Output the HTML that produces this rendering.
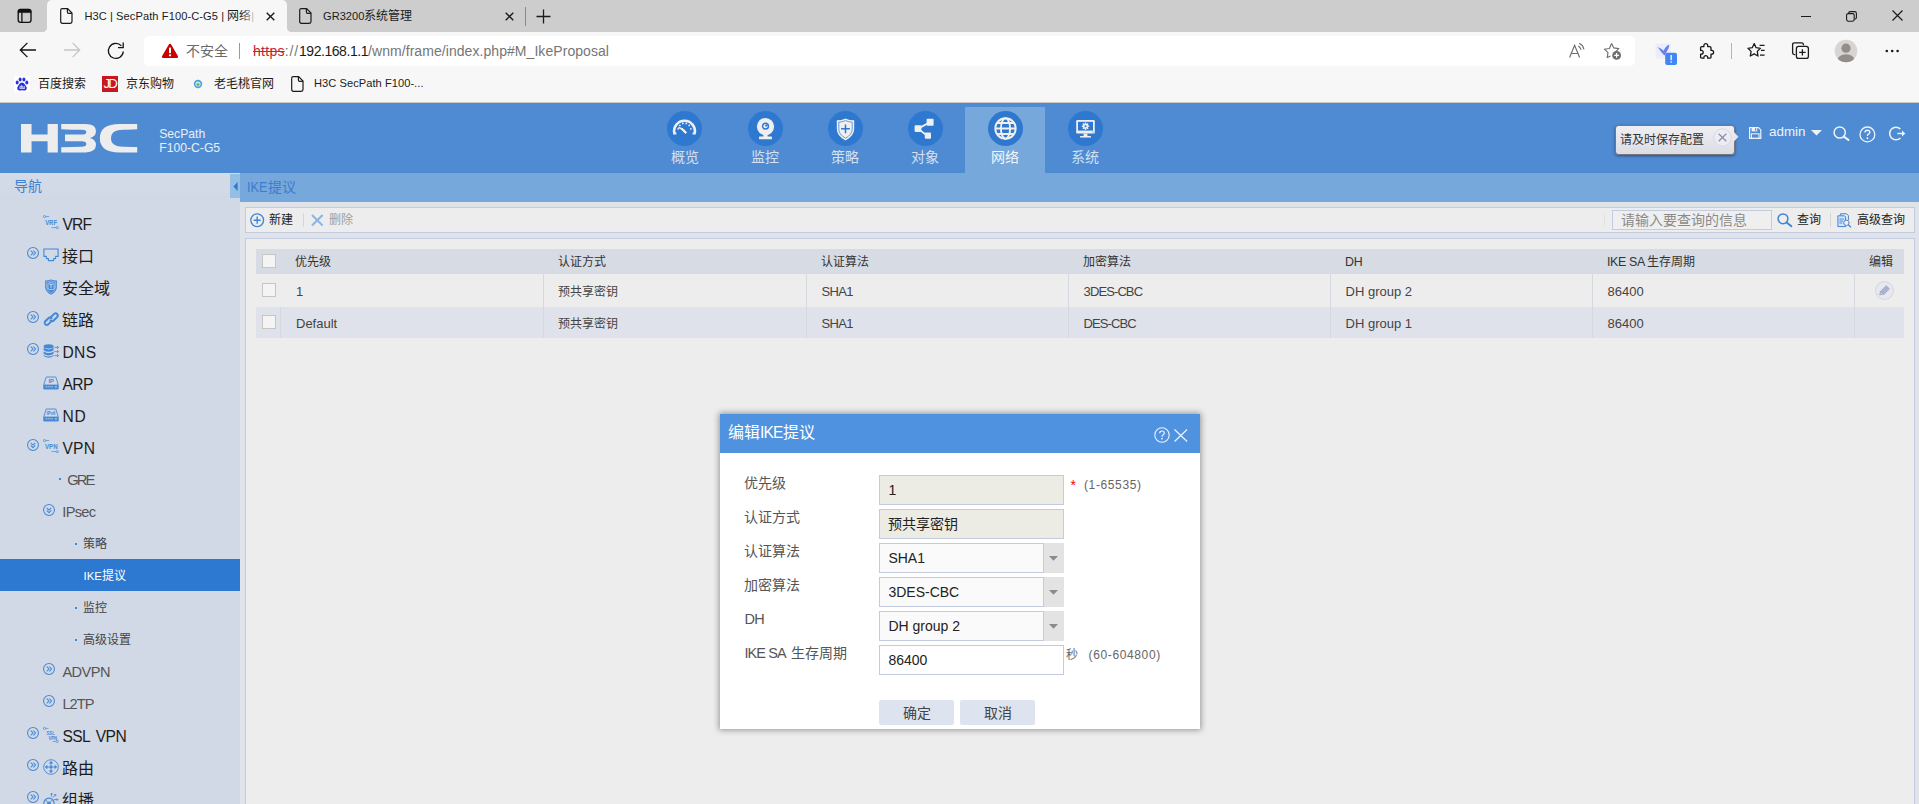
<!DOCTYPE html>
<html lang="zh-CN">
<head>
<meta charset="utf-8">
<title>H3C | SecPath F100-C-G5 | 网络</title>
<style>
*{box-sizing:border-box;margin:0;padding:0}
html,body{width:1919px;height:804px;overflow:hidden;background:#ececec}
body{position:relative;font-family:"Liberation Sans",sans-serif;font-size:12px;color:#333}
.abs{position:absolute}
.t{position:absolute;white-space:nowrap;line-height:1}
svg{position:absolute;overflow:visible}
/* ---------- browser chrome ---------- */
#tabstrip{left:0;top:0;width:1919px;height:32px;background:#cdcdcd}
#tab1{left:47px;top:0;width:240px;height:32px;background:#f7f7f7;border-radius:5px 5px 0 0}
#tab1:before,#tab1:after{content:"";position:absolute;bottom:0;width:4px;height:4px;background:radial-gradient(circle at 0 0,rgba(247,247,247,0) 3.6px,#f7f7f7 4.2px)}
#tab1:before{left:-4px}
#tab1:after{right:-4px;background:radial-gradient(circle at 100% 0,rgba(247,247,247,0) 3.6px,#f7f7f7 4.2px)}
#toolbar{left:0;top:32px;width:1919px;height:70px;background:#f7f7f7}
#addr{left:144px;top:36px;width:1491px;height:30px;background:#fff;border-radius:5px}
#chromeline{left:0;top:102px;width:1919px;height:1px;background:#cdc6c2}
/* ---------- H3C header ---------- */
#hdr{left:0;top:103px;width:1919px;height:70px;background:#4f8bd2}
#subbar{left:240px;top:173px;width:1679px;height:29px;background:#77a8dc}
.navtab{position:absolute;top:107px;width:80px;height:66px}
.navtab.on{background:#77a8dc}
.navtab i{position:absolute;left:22.5px;top:4px;width:35px;height:35px;border-radius:50%;background:#2f78d0}
.navtab span{position:absolute;left:0;width:80px;top:42.6px;text-align:center;font-size:14px;line-height:15px;color:#d3e1f3}
.navtab.on span{color:#f2f6fb}
</style>
</head>
<body>
<!-- ================= BROWSER CHROME ================= -->
<div id="tabstrip" class="abs"></div>
<div id="toolbar" class="abs"></div>
<div id="tab1" class="abs"></div>
<div id="addr" class="abs"></div>
<div id="chromeline" class="abs"></div>
<!--CHROME-START-->
<!-- tab actions icon -->
<svg style="left:16.8px;top:8.2px" width="16" height="16" viewBox="0 0 16 16"><rect x="1.2" y="1.4" width="12.8" height="13" rx="2.3" fill="none" stroke="#111" stroke-width="1.35"/><path d="M1.2 4.6V3.6Q1.2 1.4 3.4 1.4H11.8Q14 1.4 14 3.6V4.6Z" fill="#111" stroke="#111" stroke-width=".6"/><path d="M4.9 4V14" stroke="#111" stroke-width="1.3"/></svg>
<!-- tab 1 -->
<svg style="left:60px;top:8px" width="13" height="16" viewBox="0 0 13 16"><path d="M2.2 .7H7.6L12 5.1V13.6Q12 15.3 10.3 15.3H2.4Q.7 15.3 .7 13.6V2.2Q.7 .7 2.2 .7Z" fill="none" stroke="#1b1b1b" stroke-width="1.2"/><path d="M7.4 .9V4Q7.4 5.3 8.7 5.3H11.8" fill="none" stroke="#1b1b1b" stroke-width="1.2"/></svg>
<div class="t" style="left:84.4px;top:10px;width:173px;overflow:hidden;font-size:12px;color:#1b1b1b"><span style="font-size:11.1px;letter-spacing:.08px">H3C | SecPath F100-C-G5 | </span>网络<span style="font-size:11.1px">| V</span></div>
<div class="abs" style="left:240px;top:4px;width:18px;height:24px;background:linear-gradient(90deg,rgba(247,247,247,0),#f7f7f7)"></div>
<svg style="left:266px;top:12px" width="9" height="9" viewBox="0 0 9 9"><path d="M.7 .7L8.3 8.3M8.3 .7L.7 8.3" stroke="#1b1b1b" stroke-width="1.4"/></svg>
<!-- tab 2 -->
<svg style="left:298.8px;top:8px" width="13" height="16" viewBox="0 0 13 16"><path d="M2.2 .7H7.6L12 5.1V13.6Q12 15.3 10.3 15.3H2.4Q.7 15.3 .7 13.6V2.2Q.7 .7 2.2 .7Z" fill="none" stroke="#1b1b1b" stroke-width="1.2"/><path d="M7.4 .9V4Q7.4 5.3 8.7 5.3H11.8" fill="none" stroke="#1b1b1b" stroke-width="1.2"/></svg>
<div class="t" style="left:323px;top:10px;font-size:12px;color:#1b1b1b"><span style="font-size:11.1px">GR3200</span>系统管理</div>
<svg style="left:505px;top:12px" width="9" height="9" viewBox="0 0 9 9"><path d="M.7 .7L8.3 8.3M8.3 .7L.7 8.3" stroke="#1b1b1b" stroke-width="1.4"/></svg>
<div class="abs" style="left:525px;top:7px;width:1px;height:19px;background:#8a8a8a"></div>
<svg style="left:536px;top:9px" width="15" height="15" viewBox="0 0 15 15"><path d="M7.5 .5V14.5M.5 7.5H14.5" stroke="#1b1b1b" stroke-width="1.3"/></svg>
<!-- window controls -->
<div class="abs" style="left:1801px;top:15.5px;width:10px;height:1.2px;background:#1b1b1b"></div>
<svg style="left:1846px;top:11px" width="11" height="11" viewBox="0 0 11 11"><rect x=".6" y="2.6" width="7.6" height="7.6" rx="1.6" fill="none" stroke="#1b1b1b" stroke-width="1.1"/><path d="M2.8 2.4V2Q2.8 .6 4.2 .6H8.6Q10.4 .6 10.4 2.4V6.6Q10.4 8.2 9 8.2H8.4" fill="none" stroke="#1b1b1b" stroke-width="1.1"/></svg>
<svg style="left:1892px;top:10px" width="11" height="11" viewBox="0 0 11 11"><path d="M.5 .5L10.5 10.5M10.5 .5L.5 10.5" stroke="#1b1b1b" stroke-width="1.2"/></svg>
<!-- nav buttons -->
<svg style="left:19px;top:42.4px" width="18" height="16" viewBox="0 0 18 16"><path d="M8.4 .9L1.3 8L8.4 15.1M1.5 8H17" fill="none" stroke="#141414" stroke-width="1.3"/></svg>
<svg style="left:63px;top:42.4px" width="18" height="16" viewBox="0 0 18 16"><path d="M9.6 .9L16.7 8L9.6 15.1M16.5 8H1" fill="none" stroke="#c6c6c6" stroke-width="1.3"/></svg>
<svg style="left:107px;top:42px" width="18" height="18" viewBox="0 0 18 18"><path d="M16.3 9.5A7.5 7.5 0 1 1 14.4 3.9" fill="none" stroke="#141414" stroke-width="1.3"/><path d="M11 5.7H16.2V.6" fill="none" stroke="#141414" stroke-width="1.3"/></svg>
<!-- address bar contents -->
<svg style="left:161px;top:43px" width="18" height="16" viewBox="0 0 18 16"><path d="M9 .8Q9.8 .8 10.3 1.7L17 13.3Q17.7 15 15.9 15H2.1Q.3 15 1 13.3L7.7 1.7Q8.2 .8 9 .8Z" fill="#c80000"/><rect x="8" y="4.6" width="2" height="5.6" rx=".6" fill="#fff"/><circle cx="9" cy="12.3" r="1.15" fill="#fff"/></svg>
<div class="t" style="left:186px;top:44px;font-size:14px;color:#6a6a6a">不安全</div>
<div class="abs" style="left:239px;top:43px;width:1px;height:16px;background:#9a9a9a"></div>
<div class="t" id="url" style="left:253px;top:44px;font-size:14px;color:#767676;letter-spacing:.06px"><span style="color:#c4262e;text-decoration:line-through;letter-spacing:.3px">https</span><span style="letter-spacing:.8px">://</span><span style="color:#1b1b1b;letter-spacing:-.44px">192.168.1.1</span>/wnm/frame/index.php#M_IkeProposal</div>
<!-- read aloud -->
<svg style="left:1568px;top:42px" width="18" height="18" viewBox="0 0 18 18"><path d="M1.6 15.5L6.6 3.2L11.6 15.5M3.3 11.5H9.9" fill="none" stroke="#6e6e6e" stroke-width="1.15"/><path d="M10.6 4.2Q12.4 5.2 12.9 7.4M11.6 1.6Q15 3.2 15.8 7" fill="none" stroke="#6e6e6e" stroke-width="1.15" stroke-linecap="round"/></svg>
<!-- star plus -->
<svg style="left:1603px;top:42px" width="20" height="19" viewBox="0 0 20 19"><path d="M8.6 1.4L10.8 5.9L15.8 6.6L12.2 10.1M7.4 13.9L4.2 15.6L5 10.7L1.4 7.2L6.4 6.5L8.6 1.4" fill="none" stroke="#6e6e6e" stroke-width="1.15" stroke-linejoin="round"/><circle cx="13.6" cy="13.4" r="4.4" fill="#6e6e6e"/><path d="M13.6 11V15.8M11.2 13.4H16" stroke="#fff" stroke-width="1.2"/></svg>
<!-- bird extension with badge -->
<svg style="left:1655px;top:42px" width="24" height="24" viewBox="0 0 24 24"><defs><linearGradient id="bg1" x1="0" y1="0" x2="1" y2="1"><stop offset="0" stop-color="#4c8ff7"/><stop offset=".65" stop-color="#6a7df0"/><stop offset="1" stop-color="#9460e2"/></linearGradient></defs><rect x=".6" y="1.4" width="15" height="15" rx="1" fill="#ececfa"/><path d="M2.4 4.9Q6 5.8 8.6 8.8Q10.4 4.2 14.3 2.5Q14.2 6.6 11.8 9.6Q10.6 12 9.3 13.6Q7.6 11.4 6 9.8Q4.6 7 2.4 4.9Z" fill="url(#bg1)"/><rect x="10.2" y="10.8" width="11.8" height="12.2" rx="2" fill="#4285f4"/><rect x="15.5" y="13" width="1.3" height="5.2" fill="#fff"/><rect x="15.5" y="19.3" width="1.3" height="1.4" fill="#fff"/></svg>
<!-- puzzle -->
<svg style="left:1698px;top:42px" width="18" height="18" viewBox="0 0 18 18"><path d="M3.8 4.6H5.9V3.5A1.9 1.9 0 1 1 9.7 3.5V4.6H11.8Q13 4.6 13 5.8V8.4H13.7A1.9 1.9 0 1 1 13.7 12.2H13V15Q13 16.2 11.8 16.2H9.7V15.5A1.9 1.9 0 1 0 5.9 15.5V16.2H3.8Q2.6 16.2 2.6 15V12.2H3.3A1.9 1.9 0 1 0 3.3 8.4H2.6V5.8Q2.6 4.6 3.8 4.6Z" fill="none" stroke="#141414" stroke-width="1.3" stroke-linejoin="round"/></svg>
<div class="abs" style="left:1731px;top:43px;width:1px;height:16px;background:#b5b5b5"></div>
<!-- favourites list -->
<svg style="left:1747px;top:42px" width="19" height="18" viewBox="0 0 19 18"><path d="M7.2 1.6L9.1 5.7L13.4 6.3L10.3 9.4L11 14L7.2 11.9L3.3 14L4.1 9.4L1 6.3L5.3 5.7Z" fill="none" stroke="#1b1b1b" stroke-width="1.3" stroke-linejoin="round"/><path d="M12.6 3.4H17.6M14 8.4H17.6M13 13.2H17.6" stroke="#1b1b1b" stroke-width="1.3"/></svg>
<!-- collections -->
<svg style="left:1791px;top:41px" width="19" height="19" viewBox="0 0 19 19"><path d="M4.2 13.6H3.4Q1.6 13.6 1.6 11.8V3.6Q1.6 1.8 3.4 1.8H10.6Q12.4 1.8 12.4 3.6V4.2" fill="none" stroke="#1b1b1b" stroke-width="1.3"/><rect x="5.4" y="5.4" width="12" height="12" rx="2.2" fill="none" stroke="#1b1b1b" stroke-width="1.3"/><path d="M11.4 8.2V14.6M8.2 11.4H14.6" stroke="#1b1b1b" stroke-width="1.3"/></svg>
<!-- profile -->
<svg style="left:1834px;top:39px" width="24" height="24" viewBox="0 0 24 24"><defs><clipPath id="pc"><circle cx="12" cy="12" r="11.3"/></clipPath></defs><circle cx="12" cy="12" r="11.3" fill="#d7d5d2"/><g clip-path="url(#pc)" fill="#918e8b"><circle cx="12" cy="9.2" r="4.6"/><ellipse cx="12" cy="21.5" rx="8.6" ry="6.2"/></g></svg>
<svg style="left:1885px;top:49px" width="15" height="4" viewBox="0 0 15 4"><circle cx="1.8" cy="2" r="1.3" fill="#1b1b1b"/><circle cx="7.2" cy="2" r="1.3" fill="#1b1b1b"/><circle cx="12.6" cy="2" r="1.3" fill="#1b1b1b"/></svg>
<!-- bookmarks -->
<svg style="left:14px;top:76px" width="16" height="16" viewBox="0 0 16 16"><rect width="16" height="16" rx="2" fill="#fff"/><g fill="#2932e1"><ellipse cx="3.2" cy="6.6" rx="1.5" ry="2"/><ellipse cx="6.1" cy="3.4" rx="1.5" ry="2"/><ellipse cx="9.9" cy="3.4" rx="1.5" ry="2"/><ellipse cx="12.8" cy="6.6" rx="1.5" ry="2"/><path d="M8 6.6Q10 6.6 11.6 9.4Q13.4 11.4 12.6 13.2Q11.8 14.8 9.6 14.4Q8 14 6.4 14.4Q4.2 14.8 3.4 13.2Q2.6 11.4 4.4 9.4Q6 6.6 8 6.6Z"/></g><text x="8" y="13.3" font-size="4.6" font-family="Liberation Sans" font-weight="bold" fill="#fff" text-anchor="middle">du</text></svg>
<div class="t" style="left:38px;top:78px;font-size:12px;color:#1b1b1b">百度搜索</div>
<div class="abs" style="left:102px;top:76px;width:16px;height:16px;background:#c81623"></div>
<div class="t" style="left:103.4px;top:77.4px;font-size:13.3px;color:#fff;letter-spacing:-1.7px">JD</div>
<div class="t" style="left:126px;top:78px;font-size:12px;color:#1b1b1b">京东购物</div>
<svg style="left:193px;top:79px" width="10" height="10" viewBox="0 0 10 10"><circle cx="5" cy="5" r="4.2" fill="#4aa3df"/><circle cx="5" cy="5" r="2.6" fill="#cfe9f7"/><circle cx="5" cy="5.4" r="1.5" fill="#6bbf4a"/></svg>
<div class="t" style="left:214px;top:78px;font-size:12px;color:#1b1b1b">老毛桃官网</div>
<svg style="left:291px;top:76px" width="13" height="16" viewBox="0 0 13 16"><path d="M2.2 .7H7.6L12 5.1V13.6Q12 15.3 10.3 15.3H2.4Q.7 15.3 .7 13.6V2.2Q.7 .7 2.2 .7Z" fill="none" stroke="#1b1b1b" stroke-width="1.2"/><path d="M7.4 .9V4Q7.4 5.3 8.7 5.3H11.8" fill="none" stroke="#1b1b1b" stroke-width="1.2"/></svg>
<div class="t" style="left:314px;top:78.4px;font-size:11.1px;color:#1b1b1b;letter-spacing:.05px">H3C SecPath F100-...</div>
<!--CHROME-END-->

<!-- ================= H3C HEADER ================= -->
<div id="hdr" class="abs"></div>
<div id="subbar" class="abs"></div>
<!--HEADER-START-->
<!-- logo -->
<svg style="left:20.5px;top:123.5px" width="116.2" height="28.4" viewBox="0 0 116.7 28.8" preserveAspectRatio="none"><g fill="#ededed"><path d="M0 0H10.6V10.7H26.7V0H37V28.8H26.7V17.5H10.6V28.8H0Z"/><path d="M40.4 0H65Q75.3 0 75.3 7.4Q75.3 12.6 69.2 14.2Q75.3 15.9 75.3 21.4Q75.3 28.8 65 28.8H40.4V23.6Q52 23 61 23Q65.6 23 65.6 20.2Q65.6 17.5 61 17.5H44.2V10.7H61Q65.6 10.7 65.6 8.3Q65.6 5.9 61 5.9Q52 5.9 40.4 5.2Z"/><path d="M116.7 0H99Q79.2 0 79.2 14.4Q79.2 28.8 99 28.8H116.7V23.4Q108 23 103 23Q90.4 23 90.4 14.4Q90.4 5.9 103 5.9Q108 5.9 116.7 5.4Z"/></g></svg>
<div class="t" style="left:159.2px;top:127px;font-size:12.2px;line-height:14.1px;color:#e9eff8">SecPath<br>F100-C-G5</div>
<!-- nav tabs -->
<div class="navtab" style="left:645px"><i style="left:21.7px"></i><span>概览</span>
<svg style="left:21.7px;top:4px" width="35" height="35" viewBox="0 0 35 35"><path d="M7.3 22.2A10.4 10.4 0 1 1 27.7 22.2" fill="none" stroke="#efefef" stroke-width="2.6"/><path d="M6.2 21.4H9.4V23.6H6.2ZM25.6 21.4H28.8V23.6H25.6Z" fill="#efefef"/><g fill="#efefef"><circle cx="11.2" cy="17.8" r=".9"/><circle cx="12.9" cy="14.4" r=".9"/><circle cx="15.8" cy="12.4" r=".9"/><circle cx="19.3" cy="12.4" r=".9"/><circle cx="22.2" cy="14.4" r=".9"/><circle cx="23.8" cy="17.8" r=".9"/></g><path d="M11.6 16.4Q16.5 16.6 19.6 21.4L18.2 22.4Q15.4 18.6 11.6 16.4Z" fill="#efefef" stroke="#efefef" stroke-width="1"/></svg></div>
<div class="navtab" style="left:725px"><i></i><span>监控</span>
<svg style="left:22.5px;top:4px" width="35" height="35" viewBox="0 0 35 35"><circle cx="17.5" cy="15.6" r="8.6" fill="#efefef"/><circle cx="17.5" cy="15.2" r="3.6" fill="#2f78d0"/><circle cx="17.5" cy="15.2" r="2.1" fill="#efefef"/><circle cx="18.2" cy="14.6" r="1.1" fill="#2f78d0"/><rect x="15.4" y="23.5" width="4.2" height="3" fill="#efefef"/><rect x="11" y="25.6" width="13" height="2.6" rx=".6" fill="#efefef"/></svg></div>
<div class="navtab" style="left:805px"><i></i><span>策略</span>
<svg style="left:22.5px;top:4px" width="35" height="35" viewBox="0 0 35 35"><path d="M17.5 7.4Q21.5 9.3 26.2 9.3V18Q26.2 25 17.5 29.4Q8.8 25 8.8 18V9.3Q13.5 9.3 17.5 7.4Z" fill="#efefef"/><path d="M17.5 9.6Q20.6 11 24.2 11.2V18Q24.2 23.6 17.5 27.2Q10.8 23.6 10.8 18V11.2Q14.4 11 17.5 9.6Z" fill="none" stroke="#2f78d0" stroke-width=".7"/><path d="M17.5 13.4V22.2M13.1 17.8H21.9" stroke="#2f78d0" stroke-width="1.5"/></svg></div>
<div class="navtab" style="left:885px"><i></i><span>对象</span>
<svg style="left:22.5px;top:4px" width="35" height="35" viewBox="0 0 35 35"><path d="M10 17.6L22 11.2M10 17.6L19.6 25" stroke="#efefef" stroke-width="1.8" fill="none"/><rect x="6.6" y="14.2" width="6.8" height="6.8" rx="1" fill="#efefef"/><rect x="18.6" y="7.8" width="7" height="7" rx="1" fill="#efefef"/><rect x="16.8" y="21.6" width="6.2" height="6.2" rx="1" fill="#efefef"/></svg></div>
<div class="navtab on" style="left:965px"><i></i><span>网络</span>
<svg style="left:22.5px;top:4px" width="35" height="35" viewBox="0 0 35 35"><g fill="none" stroke="#efefef" stroke-width="1.9"><circle cx="17.5" cy="17.5" r="10.2"/><ellipse cx="17.5" cy="17.5" rx="4.6" ry="10.2"/><path d="M7.3 17.5H27.7M9 12H26M9 23H26"/></g></svg></div>
<div class="navtab" style="left:1045px"><i></i><span>系统</span>
<svg style="left:22.5px;top:4px" width="35" height="35" viewBox="0 0 35 35"><rect x="8.2" y="9" width="18.6" height="13.6" rx="1.2" fill="#efefef"/><rect x="10" y="10.8" width="15" height="8.8" fill="#2f78d0"/><rect x="15.6" y="22.6" width="3.8" height="2.6" fill="#efefef"/><rect x="12" y="25" width="11" height="1.6" rx=".5" fill="#efefef"/><g transform="translate(17.5 15.2)" fill="#efefef"><circle r="2.5"/><rect x="-.75" y="-3.7" width="1.5" height="7.4"/><rect x="-.75" y="-3.7" width="1.5" height="7.4" transform="rotate(45)"/><rect x="-.75" y="-3.7" width="1.5" height="7.4" transform="rotate(90)"/><rect x="-.75" y="-3.7" width="1.5" height="7.4" transform="rotate(135)"/><circle r="1.05" fill="#2f78d0"/></g><circle cx="25" cy="21" r=".6" fill="#2f78d0"/></svg></div>
<!-- save reminder tooltip -->
<div class="abs" style="left:1615.2px;top:125.2px;width:119.6px;height:29.4px;border:1px solid #77777d;border-radius:3.5px;background:linear-gradient(#efeff3,#dcdce4);box-shadow:0 1px 3px rgba(0,0,0,.45)"></div>
<div class="t" style="left:1620.2px;top:134.3px;font-size:12px;color:#333">请及时保存配置</div>
<svg style="left:1712.5px;top:128px" width="19" height="19" viewBox="0 0 19 19"><circle cx="9.5" cy="9.5" r="8.7" fill="#ececf1" stroke="#d3d6e3" stroke-width=".9"/><path d="M5.7 5.7L13.3 13.3M13.3 5.7L5.7 13.3" stroke="#8a8eaf" stroke-width="1.3"/></svg>
<svg style="left:1734.3px;top:132.4px" width="5" height="9.4" viewBox="0 0 5 9.4"><path d="M0 0L4.4 4.7L0 9.4Z" fill="#e6e6ec"/></svg>
<!-- save icon -->
<svg style="left:1748.8px;top:127px" width="12.4" height="12" viewBox="0 0 12.4 12"><path d="M.6 .6H9.6L11.8 2.8V11.4H.6Z" fill="none" stroke="#eef3fa" stroke-width="1.2" stroke-linejoin="round"/><rect x="2.6" y=".8" width="5.6" height="3.6" fill="#eef3fa"/><rect x="6" y="1.2" width="1.2" height="2.4" fill="#4f8bd2"/><rect x="2.4" y="6.8" width="7.6" height="4.6" fill="none" stroke="#eef3fa" stroke-width="1.1"/></svg>
<div class="t" style="left:1769px;top:125px;font-size:13.4px;color:#eef3fa">admin</div>
<svg style="left:1811px;top:130px" width="11" height="6" viewBox="0 0 11 6"><path d="M0 0H11L5.5 5.6Z" fill="#eef3fa"/></svg>
<svg style="left:1832.6px;top:125.8px" width="16.4" height="15" viewBox="0 0 16.4 15"><circle cx="6.7" cy="6.5" r="5.6" fill="none" stroke="#eef3fa" stroke-width="1.5"/><path d="M10.8 10.6L15.4 13.8" stroke="#eef3fa" stroke-width="2.1" stroke-linecap="round"/></svg>
<svg style="left:1858.6px;top:125.5px" width="17" height="17" viewBox="0 0 17 17"><circle cx="8.4" cy="8.4" r="7.4" fill="none" stroke="#eef3fa" stroke-width="1.3"/><path d="M6 6.4Q6 4.2 8.4 4.2Q10.8 4.2 10.8 6.2Q10.8 7.4 9.4 8.2Q8.4 8.8 8.4 10" fill="none" stroke="#eef3fa" stroke-width="1.4"/><circle cx="8.4" cy="12.2" r=".95" fill="#eef3fa"/></svg>
<svg style="left:1888px;top:125px" width="18" height="17" viewBox="0 0 18 17"><path d="M12.4 4A6.3 6.3 0 1 0 12.4 13" fill="none" stroke="#eef3fa" stroke-width="1.6"/><path d="M9.4 8.5H15" stroke="#eef3fa" stroke-width="1.5"/><path d="M14 5.6L17.3 8.5L14 11.4Z" fill="#eef3fa"/></svg>
<!-- sub bar -->
<div class="abs" style="left:0;top:173px;width:240px;height:29px;background:linear-gradient(#d4dbe8,#d0d8e6)"></div>
<div class="t" style="left:14px;top:179px;font-size:14px;color:#3f80d2">导航</div>
<div class="abs" style="left:230px;top:174px;width:10px;height:24px;background:#93bfe5"></div>
<svg style="left:232.6px;top:182px" width="5" height="9" viewBox="0 0 5 9"><path d="M4.6 0V9L.4 4.5Z" fill="#2f78d0"/></svg>
<div class="t" style="left:247.4px;top:180.4px;font-size:14px;color:#3b7cd0"><span style="display:inline-block;font-size:14.8px;transform:scaleX(.85);transform-origin:0 50%;margin-right:-3.4px;vertical-align:baseline">IKE</span>提议</div>
<!--HEADER-END-->

<!-- ================= NAV ================= -->
<!--NAV-START-->
<div class="abs" style="left:0;top:202px;width:240px;height:602px;background:#d2d9e6"></div>
<svg style="left:43px;top:214.7px" width="16" height="16" viewBox="0 0 16 16"><circle cx="1.5" cy="1.6" r="1.1" fill="none" stroke="#4488d8" stroke-width=".7"/><path d="M2.6 1.6H6.2M8.6 12.6H13.2" stroke="#4488d8" stroke-width=".7" fill="none"/><circle cx="14.3" cy="12.6" r="1.1" fill="none" stroke="#4488d8" stroke-width=".7"/><text x="2.2" y="10" font-size="7.4" font-family="Liberation Sans" font-weight="bold" fill="#4488d8" textLength="11.8" lengthAdjust="spacingAndGlyphs">VRF</text></svg>
<div class="t" style="left:62.4px;top:217.1px;font-size:15.6px;color:#1c1c1c;letter-spacing:-0.75px">VRF</div>
<svg style="left:27.0px;top:247.0px" width="12" height="12" viewBox="0 0 12 12"><circle cx="6" cy="6" r="5.45" fill="none" stroke="#4488d8" stroke-width="1.05"/><path d="M3.7 3.7L6 6L3.7 8.3M6.3 3.7L8.6 6L6.3 8.3" fill="none" stroke="#4488d8" stroke-width="1.05"/></svg>
<svg style="left:43px;top:246.7px" width="16" height="16" viewBox="0 0 16 16"><path d="M.9 2H15.1V9.4H12.6V11.6H10.6V13.6H5.4V11.6H3.4V9.4H.9Z" fill="none" stroke="#4488d8" stroke-width="1.1" stroke-linejoin="round"/></svg>
<div class="t" style="left:62.2px;top:249.2px;font-size:16px;color:#1c1c1c;">接口</div>
<svg style="left:43px;top:278.7px" width="16" height="16" viewBox="0 0 16 16"><path d="M8 .4Q11 1.5 13.9 1.5V8Q13.9 13 8 15.8Q2.1 13 2.1 8V1.5Q5 1.5 8 .4Z" fill="#4488d8"/><path d="M8 1.8Q10.4 2.7 12.6 2.8V8Q12.6 12 8 14.4Q3.4 12 3.4 8V2.8Q5.6 2.7 8 1.8Z" fill="none" stroke="#d2d9e6" stroke-width=".5"/><rect x="4.9" y="3.9" width="6.2" height="6.6" rx="1.4" fill="none" stroke="#d2d9e6" stroke-width=".8"/><path d="M6.3 5.6H9.7M8 5.6V9.2" stroke="#d2d9e6" stroke-width=".9"/></svg>
<div class="t" style="left:62.2px;top:281.2px;font-size:16px;color:#1c1c1c;">安全域</div>
<svg style="left:27.0px;top:311.0px" width="12" height="12" viewBox="0 0 12 12"><circle cx="6" cy="6" r="5.45" fill="none" stroke="#4488d8" stroke-width="1.05"/><path d="M3.7 3.7L6 6L3.7 8.3M6.3 3.7L8.6 6L6.3 8.3" fill="none" stroke="#4488d8" stroke-width="1.05"/></svg>
<svg style="left:43px;top:310.7px" width="16" height="16" viewBox="0 0 16 16"><g fill="none" stroke="#4488d8" stroke-width="2" stroke-linecap="round"><path d="M7 9L3.9 12.1A2.2 2.2 0 0 1 .9 9.1L4.4 5.6A2.2 2.2 0 0 1 7.6 5.7" transform="translate(1 1.6)"/><path d="M7 4.4L10.1 1.3A2.2 2.2 0 0 1 13.2 4.4L9.7 7.9A2.2 2.2 0 0 1 6.5 7.8" transform="translate(1 1.6)"/></g></svg>
<div class="t" style="left:62.2px;top:313.2px;font-size:16px;color:#1c1c1c;">链路</div>
<svg style="left:27.0px;top:343.0px" width="12" height="12" viewBox="0 0 12 12"><circle cx="6" cy="6" r="5.45" fill="none" stroke="#4488d8" stroke-width="1.05"/><path d="M3.7 3.7L6 6L3.7 8.3M6.3 3.7L8.6 6L6.3 8.3" fill="none" stroke="#4488d8" stroke-width="1.05"/></svg>
<svg style="left:43px;top:342.7px" width="16" height="16" viewBox="0 0 16 16"><g fill="#4488d8"><ellipse cx="5.6" cy="3.4" rx="5" ry="2.1"/><path d="M.6 4.8Q5.6 8 10.6 4.8V7.2Q5.6 10.4 .6 7.2Z"/><path d="M.6 8.4Q5.6 11.6 10.6 8.4V10.8Q5.6 14 .6 10.8Z"/><path d="M.6 12Q5.6 15.2 10.6 12V13Q5.6 16.4 .6 13Z"/></g><g stroke="#4488d8" stroke-width=".8" fill="none"><path d="M11.4 4.4H15.4M11.4 8.6H15.4M11.4 12.6H15.4"/><path d="M14 3L15.6 4.4L14 5.8M14 7.2L15.6 8.6L14 10M14 11.2L15.6 12.6L14 14"/></g></svg>
<div class="t" style="left:62.4px;top:345.1px;font-size:15.6px;color:#1c1c1c;letter-spacing:0.40px">DNS</div>
<svg style="left:43px;top:374.7px" width="16" height="16" viewBox="0 0 16 16"><path d="M3.2 2H12.8L15.2 9.6V14H.8V9.6Z" fill="none" stroke="#4488d8" stroke-width=".9" stroke-linejoin="round"/><rect x=".8" y="9.6" width="14.4" height="4.4" fill="#4488d8"/><path d="M2.6 11.8H10.6" stroke="#d2d9e6" stroke-width="1" stroke-dasharray="1.2 .8"/><rect x="12.2" y="11.2" width="1.4" height="1.4" fill="#d2d9e6"/><text x="5.4" y="8" font-size="5.8" font-family="Liberation Sans" font-weight="bold" fill="#4488d8">IP</text></svg>
<div class="t" style="left:62.4px;top:377.1px;font-size:15.6px;color:#1c1c1c;letter-spacing:-0.55px">ARP</div>
<svg style="left:43px;top:406.7px" width="16" height="16" viewBox="0 0 16 16"><path d="M3.2 2H12.8L15.2 9.6V14H.8V9.6Z" fill="none" stroke="#4488d8" stroke-width=".9" stroke-linejoin="round"/><rect x=".8" y="9.6" width="14.4" height="4.4" fill="#4488d8"/><path d="M2.6 11.8H10.6" stroke="#d2d9e6" stroke-width="1" stroke-dasharray="1.2 .8"/><rect x="12.2" y="11.2" width="1.4" height="1.4" fill="#d2d9e6"/><text x="3.6" y="8" font-size="5" font-family="Liberation Sans" font-weight="bold" fill="#4488d8" textLength="8.8" lengthAdjust="spacingAndGlyphs">IPv6</text></svg>
<div class="t" style="left:62.4px;top:409.1px;font-size:15.6px;color:#1c1c1c;letter-spacing:0.90px">ND</div>
<svg style="left:27.0px;top:439.0px" width="12" height="12" viewBox="0 0 12 12"><circle cx="6" cy="6" r="5.45" fill="none" stroke="#4488d8" stroke-width="1.05"/><path d="M3.7 3.8L6 6.1L8.3 3.8M3.7 6.4L6 8.7L8.3 6.4" fill="none" stroke="#4488d8" stroke-width="1.05"/></svg>
<svg style="left:43px;top:438.7px" width="16" height="16" viewBox="0 0 16 16"><circle cx="1.5" cy="1.6" r="1.1" fill="none" stroke="#4488d8" stroke-width=".7"/><path d="M2.6 1.6H6.2M8.6 12.6H13.2" stroke="#4488d8" stroke-width=".7" fill="none"/><circle cx="14.3" cy="12.6" r="1.1" fill="none" stroke="#4488d8" stroke-width=".7"/><text x="2" y="10" font-size="7.4" font-family="Liberation Sans" font-weight="bold" fill="#4488d8" textLength="12.6" lengthAdjust="spacingAndGlyphs">VPN</text></svg>
<div class="t" style="left:62.4px;top:441.1px;font-size:15.6px;color:#1c1c1c;letter-spacing:0.30px">VPN</div>
<div class="abs" style="left:58.8px;top:478px;width:2px;height:2px;background:#4488d8"></div>
<div class="t" style="left:67.2px;top:472.6px;font-size:14.8px;color:#555;letter-spacing:-1.95px">GRE</div>
<svg style="left:42.9px;top:503.6px" width="12" height="12" viewBox="0 0 12 12"><circle cx="6" cy="6" r="5.45" fill="none" stroke="#4488d8" stroke-width="1.05"/><path d="M3.7 3.8L6 6.1L8.3 3.8M3.7 6.4L6 8.7L8.3 6.4" fill="none" stroke="#4488d8" stroke-width="1.05"/></svg>
<div class="t" style="left:62.3px;top:504.7px;font-size:14.6px;color:#555;letter-spacing:-0.70px">IPsec</div>
<div class="abs" style="left:75px;top:542.6px;width:2px;height:2px;background:#4488d8"></div>
<div class="t" style="left:83.2px;top:538.4px;font-size:12px;color:#444;">策略</div>
<div class="abs" style="left:0;top:559px;width:240px;height:32px;background:#2d78d0"></div>
<div class="t" style="left:83.6px;top:569.8px;font-size:12px;color:#fff"><span style="font-size:11.4px;letter-spacing:0px">IKE</span>提议</div>
<div class="abs" style="left:75px;top:606.6px;width:2px;height:2px;background:#4488d8"></div>
<div class="t" style="left:83.2px;top:602.4px;font-size:12px;color:#444;">监控</div>
<div class="abs" style="left:75px;top:638.6px;width:2px;height:2px;background:#4488d8"></div>
<div class="t" style="left:83.2px;top:634.4px;font-size:12px;color:#444;">高级设置</div>
<svg style="left:42.9px;top:663.0px" width="12" height="12" viewBox="0 0 12 12"><circle cx="6" cy="6" r="5.45" fill="none" stroke="#4488d8" stroke-width="1.05"/><path d="M3.7 3.7L6 6L3.7 8.3M6.3 3.7L8.6 6L6.3 8.3" fill="none" stroke="#4488d8" stroke-width="1.05"/></svg>
<div class="t" style="left:62.4px;top:665.2px;font-size:14.6px;color:#555;letter-spacing:-0.55px">ADVPN</div>
<svg style="left:42.9px;top:694.7px" width="12" height="12" viewBox="0 0 12 12"><circle cx="6" cy="6" r="5.45" fill="none" stroke="#4488d8" stroke-width="1.05"/><path d="M3.7 3.7L6 6L3.7 8.3M6.3 3.7L8.6 6L6.3 8.3" fill="none" stroke="#4488d8" stroke-width="1.05"/></svg>
<div class="t" style="left:62.4px;top:697.2px;font-size:14.6px;color:#555;letter-spacing:-0.90px">L2TP</div>
<svg style="left:27.0px;top:727.0px" width="12" height="12" viewBox="0 0 12 12"><circle cx="6" cy="6" r="5.45" fill="none" stroke="#4488d8" stroke-width="1.05"/><path d="M3.7 3.7L6 6L3.7 8.3M6.3 3.7L8.6 6L6.3 8.3" fill="none" stroke="#4488d8" stroke-width="1.05"/></svg>
<svg style="left:43px;top:726.6px" width="16" height="16" viewBox="0 0 16 16"><circle cx="1.5" cy="1.4" r="1.1" fill="none" stroke="#4488d8" stroke-width=".7"/><path d="M2.6 1.4H5.4M9.6 14.4H13.2" stroke="#4488d8" stroke-width=".7" fill="none"/><circle cx="14.3" cy="14.4" r="1.1" fill="none" stroke="#4488d8" stroke-width=".7"/><text x="3.4" y="7.6" font-size="5.8" font-weight="bold" font-family="Liberation Sans" fill="#4488d8" textLength="8.4" lengthAdjust="spacingAndGlyphs">SSL</text><text x="5.4" y="12.8" font-size="5.8" font-weight="bold" font-family="Liberation Sans" fill="#4488d8" textLength="8.8" lengthAdjust="spacingAndGlyphs">VPN</text></svg>
<div class="t" style="left:62.4px;top:728.9px;font-size:15.6px;color:#1c1c1c;letter-spacing:-0.55px">SSL<span style="letter-spacing:1.2px"> </span>VPN</div>
<svg style="left:27.0px;top:759.0px" width="12" height="12" viewBox="0 0 12 12"><circle cx="6" cy="6" r="5.45" fill="none" stroke="#4488d8" stroke-width="1.05"/><path d="M3.7 3.7L6 6L3.7 8.3M6.3 3.7L8.6 6L6.3 8.3" fill="none" stroke="#4488d8" stroke-width="1.05"/></svg>
<svg style="left:43px;top:759.0px" width="16" height="16" viewBox="0 0 16 16"><circle cx="8" cy="8" r="7.3" fill="none" stroke="#4488d8" stroke-width=".9"/><g fill="#4488d8"><path d="M8 1.8L10.2 4.4H5.8Z"/><path d="M8 14.2L10.2 11.6H5.8Z"/><path d="M1.8 8L4.4 5.8V10.2Z"/><path d="M14.2 8L11.6 5.8V10.2Z"/><circle cx="8" cy="8" r="1.7"/></g><path d="M8 4V6M8 10V12M4 8H6M10 8H12" stroke="#4488d8" stroke-width="1"/></svg>
<div class="t" style="left:62.2px;top:761.3px;font-size:16px;color:#1c1c1c;">路由</div>
<svg style="left:27.0px;top:791.0px" width="12" height="12" viewBox="0 0 12 12"><circle cx="6" cy="6" r="5.45" fill="none" stroke="#4488d8" stroke-width="1.05"/><path d="M3.7 3.7L6 6L3.7 8.3M6.3 3.7L8.6 6L6.3 8.3" fill="none" stroke="#4488d8" stroke-width="1.05"/></svg>
<svg style="left:43px;top:791.5px" width="16" height="16" viewBox="0 0 16 16"><circle cx="6" cy="11.4" r="5.2" fill="none" stroke="#4488d8" stroke-width="1.2"/><circle cx="6" cy="11.4" r="2" fill="#4488d8"/><path d="M2.6 8L4.6 10M9.4 8L7.4 10M2.6 14.8L4.6 12.8" stroke="#4488d8" stroke-width="1"/><g stroke="#4488d8" stroke-width=".9" fill="none"><path d="M10 5.6L12.6 2.8M8.6 4.6V1.2M11 7.6H15"/><path d="M11.2 2.6H12.8V4.2M7.4 2.4L8.6 1.2L9.8 2.4M13.8 6.4L15 7.6L13.8 8.8"/></g></svg>
<div class="t" style="left:62.2px;top:793.3px;font-size:16px;color:#1c1c1c;">组播</div>
<!--NAV-END-->

<!-- ================= MAIN ================= -->
<!--MAIN-START-->
<div class="abs" style="left:240px;top:202px;width:1679px;height:602px;background:#e1e3ea"></div>
<div class="abs" style="left:245px;top:207px;width:1670px;height:26px;background:#ededed;border:1px solid #c3cbe0"></div>
<svg style="left:250px;top:212.6px" width="14.4" height="14.4" viewBox="0 0 14.4 14.4"><circle cx="7.2" cy="7.2" r="6.4" fill="none" stroke="#3f84d6" stroke-width="1.3"/><path d="M7.2 3.6V10.8M3.6 7.2H10.8" stroke="#3f84d6" stroke-width="1.4"/></svg>
<div class="t" style="left:268.6px;top:213.6px;font-size:12px;color:#222">新建</div>
<div class="abs" style="left:303px;top:213px;width:1px;height:14px;background:#d6d6d6"></div>
<svg style="left:310.6px;top:213.6px" width="12.6" height="12.6" viewBox="0 0 12.6 12.6"><path d="M1 1L11.6 11.6M11.6 1L1 11.6" stroke="#8fb4e4" stroke-width="2.1"/></svg>
<div class="t" style="left:329px;top:213.6px;font-size:12px;color:#a0a0a0">删除</div>
<div class="abs" style="left:1604px;top:213px;width:1px;height:14px;background:#e2e2e2"></div>
<div class="abs" style="left:1612px;top:210px;width:160px;height:20px;background:#efefef;border:1px solid #c3cbe0"></div>
<div class="t" style="left:1621px;top:213.2px;font-size:14px;color:#8a8a8a">请输入要查询的信息</div>
<svg style="left:1776.6px;top:213.2px" width="16" height="14" viewBox="0 0 16 14"><circle cx="6" cy="5.8" r="4.9" fill="none" stroke="#3f84d6" stroke-width="1.5"/><path d="M9.6 9.4L14.4 13.2" stroke="#3f84d6" stroke-width="1.9" stroke-linecap="round"/></svg>
<div class="t" style="left:1797px;top:213.6px;font-size:12px;color:#222">查询</div>
<div class="abs" style="left:1830px;top:213px;width:1px;height:14px;background:#d6d6d6"></div>
<svg style="left:1837px;top:212.6px" width="15" height="15" viewBox="0 0 15 15"><path d="M3.4 2.4V.8H9.6L11.4 2.6V7" fill="none" stroke="#3f84d6" stroke-width="1"/><path d="M.9 2.8H7.4L8.6 4V13.6H.9Z" fill="#d6e4f6" stroke="#3f84d6" stroke-width="1"/><path d="M2.4 6H7M2.4 8H6M2.4 10H5.4" stroke="#3f84d6" stroke-width=".9"/><circle cx="9.4" cy="9.8" r="2.7" fill="#eeeeee" stroke="#3f84d6" stroke-width="1"/><path d="M11.4 11.8L14 14.4" stroke="#3f84d6" stroke-width="1.3"/></svg>
<div class="t" style="left:1857px;top:213.6px;font-size:12px;color:#222">高级查询</div>
<div class="abs" style="left:245px;top:238px;width:1670px;height:580px;background:#ededed;border:1px solid #c3cbe0"></div>
<div class="abs" style="left:256px;top:249px;width:1648px;height:24.5px;background:#d6dbe4"></div>
<div class="abs" style="left:256px;top:306.5px;width:1648px;height:31.9px;background:#dfe2ea"></div>
<div class="abs" style="left:543.3px;top:274px;width:1px;height:64.4px;background:#d6d8df"></div>
<div class="abs" style="left:805.5px;top:274px;width:1px;height:64.4px;background:#d6d8df"></div>
<div class="abs" style="left:1067.7px;top:274px;width:1px;height:64.4px;background:#d6d8df"></div>
<div class="abs" style="left:1329.9px;top:274px;width:1px;height:64.4px;background:#d6d8df"></div>
<div class="abs" style="left:1592.0px;top:274px;width:1px;height:64.4px;background:#d6d8df"></div>
<div class="abs" style="left:1854.2px;top:274px;width:1px;height:64.4px;background:#d6d8df"></div>
<div class="abs" style="left:280.4px;top:306.6px;width:1px;height:31.8px;background:#d6d8df"></div>
<div class="abs" style="left:262px;top:254.0px;width:14px;height:14px;background:#f4f4f4;border:1px solid #c9c5c0"></div>
<div class="abs" style="left:262px;top:283.0px;width:14px;height:14px;background:#f4f4f4;border:1px solid #c9c5c0"></div>
<div class="abs" style="left:262px;top:315.0px;width:14px;height:14px;background:#f4f4f4;border:1px solid #c9c5c0"></div>
<div class="t" style="left:295px;top:256.4px;font-size:12px;color:#333">优先级</div>
<div class="t" style="left:558px;top:256.4px;font-size:12px;color:#333">认证方式</div>
<div class="t" style="left:821px;top:256.4px;font-size:12px;color:#333">认证算法</div>
<div class="t" style="left:1083px;top:256.4px;font-size:12px;color:#333">加密算法</div>
<div class="t" style="left:1345px;top:255.7px;font-size:12.4px;color:#333;letter-spacing:-.3px">DH</div>
<div class="t" style="left:1607px;top:256.4px;font-size:12px;color:#333"><span style="font-size:12.4px;letter-spacing:-.35px;position:relative;top:-.5px">IKE SA </span>生存周期</div>
<div class="t" style="left:1869px;top:256.4px;font-size:12px;color:#333">编辑</div>
<div class="t" style="left:296.0px;top:284.7px;font-size:13px;color:#444;letter-spacing:0.00px">1</div>
<div class="t" style="left:558.0px;top:286.2px;font-size:12px;color:#444">预共享密钥</div>
<div class="t" style="left:821.4px;top:284.7px;font-size:13px;color:#444;letter-spacing:-0.60px">SHA1</div>
<div class="t" style="left:1083.6px;top:284.7px;font-size:13px;color:#444;letter-spacing:-0.90px">3DES-CBC</div>
<div class="t" style="left:1345.6px;top:284.7px;font-size:13px;color:#444;letter-spacing:0.00px">DH group 2</div>
<div class="t" style="left:1607.6px;top:284.7px;font-size:13px;color:#444;letter-spacing:0.00px">86400</div>
<div class="t" style="left:296.0px;top:316.7px;font-size:13px;color:#444;letter-spacing:0.00px">Default</div>
<div class="t" style="left:558.0px;top:318.2px;font-size:12px;color:#444">预共享密钥</div>
<div class="t" style="left:821.4px;top:316.7px;font-size:13px;color:#444;letter-spacing:-0.60px">SHA1</div>
<div class="t" style="left:1083.6px;top:316.7px;font-size:13px;color:#444;letter-spacing:-0.90px">DES-CBC</div>
<div class="t" style="left:1345.6px;top:316.7px;font-size:13px;color:#444;letter-spacing:0.00px">DH group 1</div>
<div class="t" style="left:1607.6px;top:316.7px;font-size:13px;color:#444;letter-spacing:0.00px">86400</div>
<svg style="left:1874.9px;top:280.8px" width="19" height="19" viewBox="0 0 19 19"><circle cx="9.5" cy="9.5" r="9" fill="#e7e8ed" stroke="#d0d4e1" stroke-width=".9"/><path d="M4.1 14.3L5.2 10.3L11.2 4.3L14.9 7.7L9 13.8Z" fill="#a3aac9"/><path d="M6.6 11L12.2 5.4M8.2 12.4L13.8 6.8" stroke="#c9cde0" stroke-width=".7"/><circle cx="6.4" cy="12.6" r=".7" fill="#e7e8ed"/></svg>
<!--MAIN-END-->

<!-- ================= DIALOG ================= -->
<!--DIALOG-START-->
<div class="abs" style="left:720px;top:413.5px;width:480px;height:315.5px;background:#fff;box-shadow:0 0 6px 1px rgba(0,0,0,.38)"></div>
<div class="abs" style="left:720px;top:413.5px;width:480px;height:39.5px;background:#4f92e0"></div>
<div class="t" style="left:728px;top:424.6px;font-size:16px;color:#fff">编辑<span style="font-size:15.6px;letter-spacing:-.85px">IKE</span>提议</div>
<svg style="left:1154px;top:427px" width="16" height="16" viewBox="0 0 16 16"><circle cx="8" cy="8" r="7.2" fill="none" stroke="#eef4fc" stroke-width="1.1"/><path d="M5.7 6.2Q5.7 4 8 4Q10.3 4 10.3 6Q10.3 7.1 9 7.9Q8 8.5 8 9.7" fill="none" stroke="#eef4fc" stroke-width="1.2"/><circle cx="8" cy="11.7" r=".85" fill="#eef4fc"/></svg>
<svg style="left:1173.6px;top:428.6px" width="13.6" height="13" viewBox="0 0 13.6 13"><path d="M.5 .5L13.1 12.5M13.1 .5L.5 12.5" stroke="#eef4fc" stroke-width="1.2"/></svg>
<div class="t" style="left:744px;top:476.2px;font-size:14px;color:#555">优先级</div>
<div class="t" style="left:744px;top:510.0px;font-size:14px;color:#555">认证方式</div>
<div class="t" style="left:744px;top:544.0px;font-size:14px;color:#555">认证算法</div>
<div class="t" style="left:744px;top:577.8px;font-size:14px;color:#555">加密算法</div>
<div class="t" style="left:744.4px;top:611.5px;font-size:14.5px;color:#555;letter-spacing:-.5px">DH</div>
<div class="t" style="left:744.4px;top:645.8px;font-size:14px;color:#555"><span style="font-size:14.5px;letter-spacing:-.87px">IKE SA</span><span style="letter-spacing:1.6px"> </span>生存周期</div>
<div class="abs" style="left:879px;top:475.0px;width:185px;height:29.5px;background:#ecebe4;border:1px solid #c3cbe0"></div>
<div class="t" style="left:888.4px;top:482.8px;font-size:14px;color:#222">1</div>
<div class="abs" style="left:879px;top:509.2px;width:185px;height:29.5px;background:#ecebe4;border:1px solid #c3cbe0"></div>
<div class="t" style="left:888px;top:517.2px;font-size:14px;color:#222">预共享密钥</div>
<div class="abs" style="left:879px;top:543.2px;width:165px;height:29.5px;background:#fafafa;border:1px solid #c3cbe0"></div>
<div class="t" style="left:888.4px;top:551.0px;font-size:14px;color:#222">SHA1</div>
<div class="abs" style="left:1044px;top:543.2px;width:20px;height:29.5px;background:#e3e3e3"></div>
<svg style="left:1049.4px;top:556.2px" width="9" height="5" viewBox="0 0 9 5"><path d="M0 0H9L4.5 4.8Z" fill="#8c8c8c"/></svg>
<div class="abs" style="left:879px;top:577.2px;width:165px;height:29.5px;background:#fafafa;border:1px solid #c3cbe0"></div>
<div class="t" style="left:888.4px;top:585.0px;font-size:14px;color:#222">3DES-CBC</div>
<div class="abs" style="left:1044px;top:577.2px;width:20px;height:29.5px;background:#e3e3e3"></div>
<svg style="left:1049.4px;top:590.2px" width="9" height="5" viewBox="0 0 9 5"><path d="M0 0H9L4.5 4.8Z" fill="#8c8c8c"/></svg>
<div class="abs" style="left:879px;top:611.2px;width:165px;height:29.5px;background:#fafafa;border:1px solid #c3cbe0"></div>
<div class="t" style="left:888.4px;top:619.0px;font-size:14px;color:#222">DH group 2</div>
<div class="abs" style="left:1044px;top:611.2px;width:20px;height:29.5px;background:#e3e3e3"></div>
<svg style="left:1049.4px;top:624.2px" width="9" height="5" viewBox="0 0 9 5"><path d="M0 0H9L4.5 4.8Z" fill="#8c8c8c"/></svg>
<div class="abs" style="left:879px;top:645.2px;width:185px;height:29.5px;background:#fff;border:1px solid #c3cbe0"></div>
<div class="t" style="left:888.4px;top:653.0px;font-size:14px;color:#222">86400</div>
<div class="t" style="left:1070.6px;top:477.6px;font-size:14px;color:#f00">*</div>
<div class="t" style="left:1084px;top:478.6px;font-size:12px;color:#666;letter-spacing:.62px">(1-65535)</div>
<div class="t" style="left:1066px;top:648.6px;font-size:12px;color:#666">秒</div>
<div class="t" style="left:1088.6px;top:649px;font-size:12px;color:#666;letter-spacing:.62px">(60-604800)</div>
<div class="abs" style="left:879px;top:700.2px;width:75px;height:24.6px;background:#dde4f0;border-radius:2px"></div>
<div class="t" style="left:902.5px;top:705.6px;font-size:14px;color:#444">确定</div>
<div class="abs" style="left:960px;top:700.2px;width:75px;height:24.6px;background:#dde4f0;border-radius:2px"></div>
<div class="t" style="left:983.5px;top:705.6px;font-size:14px;color:#444">取消</div>
<!--DIALOG-END-->
</body>
</html>
